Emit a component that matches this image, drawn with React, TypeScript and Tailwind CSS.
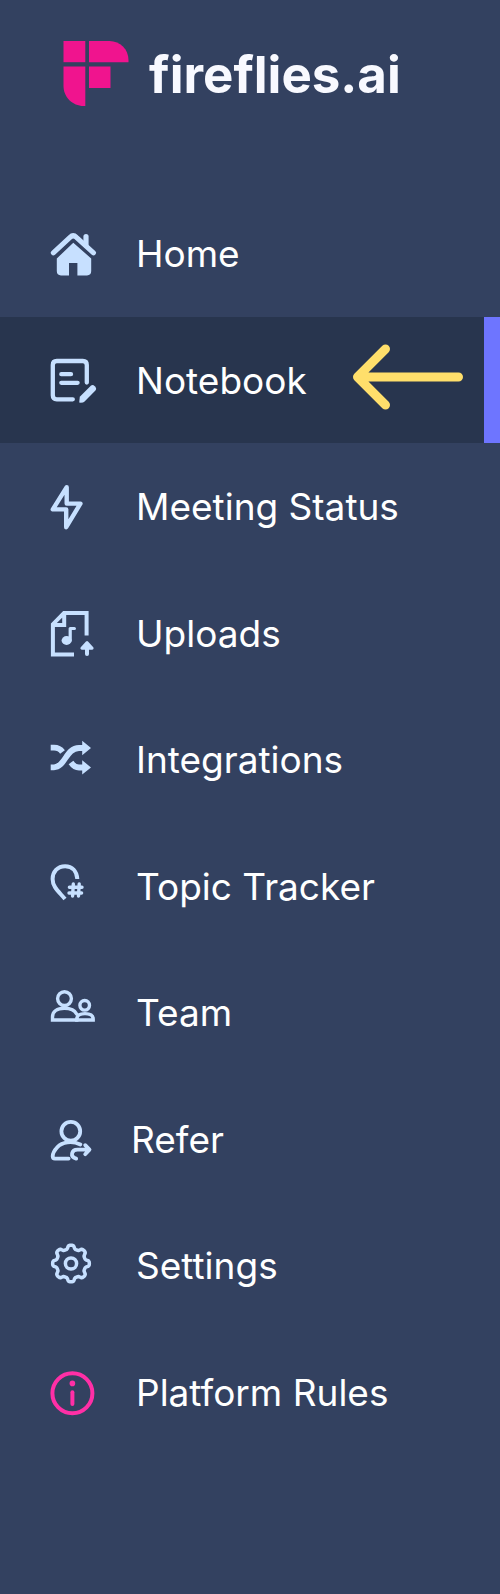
import React from "react";

// Outline of an eight-toothed gear around (23, 21.5)
const gearPath = (() => {
  const steps = 128;
  const points: string[] = [];
  for (let i = 0; i < steps; i++) {
    const angle = (i / steps) * Math.PI * 2;
    const radius = 16.5 + 1.9 * Math.tanh(2 * Math.cos(8 * angle));
    const x = 23 + radius * Math.cos(angle);
    const y = 21.5 + radius * Math.sin(angle);
    points.push(`${x.toFixed(2)} ${y.toFixed(2)}`);
  }
  return `M${points.join("L")}Z`;
})();

const Icon: React.FC<{ width?: number; children: React.ReactNode }> = ({
  width = 48,
  children,
}) => (
  <svg
    width={width}
    height={48}
    viewBox={`0 0 ${width} 48`}
    fill="none"
    stroke="currentColor"
    strokeWidth={4}
    strokeLinecap="round"
    strokeLinejoin="round"
    aria-hidden="true"
    className="shrink-0 overflow-visible"
  >
    {children}
  </svg>
);

const navItems = [
  {
    name: "Home",
    icon: (
      <Icon>
        <path d="M5.3 22.8 22 7.3Q25.2 4.2 28.4 7.3L45.5 22.8" strokeWidth={5} />
        <path d="M38 6.5V15" strokeWidth={5.2} />
        <path
          d="M25.3 12.7 43.2 28.5V41Q43.2 45.4 39 45.4H29.4V33H21V45.4H13Q8.8 45.4 8.8 41V28.5Z"
          fill="currentColor"
          stroke="none"
        />
      </Icon>
    ),
  },
  {
    name: "Notebook",
    icon: (
      <Icon>
        <g strokeWidth={4.3}>
          <path d="M38.8 25.5V8Q38.8 4 34.8 4H8.8Q4.8 4 4.8 8V38.3Q4.8 42.3 8.8 42.3H24.8" />
          <path d="M13.3 17.2H23M13.3 25.8H29.6" />
        </g>
        <path
          d="M31.2 45.6 31.8 39.8 42.8 28.8Q44.6 27.2 46.8 29.2 49.2 31.5 47.4 33.6L36.6 44.5Q35 46 31.2 45.6Z"
          fill="currentColor"
          stroke="none"
        />
      </Icon>
    ),
  },
  {
    name: "Meeting Status",
    icon: (
      <Icon>
        <path d="M18.7 4.2 4.8 26.4H18.2V44.2L32.4 20.6H18.7Z" strokeWidth={4.4} />
      </Icon>
    ),
  },
  {
    name: "Uploads",
    icon: (
      <Icon>
        <path
          d="M38.6 25.5V3H16L4.9 14.2V44.6H26M5.5 15H16.2V3.5"
          strokeLinecap="butt"
          strokeLinejoin="miter"
        />
        <ellipse cx="18.6" cy="30.5" rx="5" ry="4.4" fill="currentColor" stroke="none" />
        <path d="M22.2 30.5V18.5H26.4" strokeWidth={3.2} />
        <path d="M39 36V44" />
        <path d="M39 32.5 33.8 38.3H44.2Z" fill="currentColor" strokeWidth={2.8} />
      </Icon>
    ),
  },
  {
    name: "Integrations",
    icon: (
      <Icon>
        <g strokeWidth={5.8} strokeLinecap="butt">
          <path d="M2.7 31.3H6C17 31.3 18 12 31 12H36" />
          <path d="M2.7 11.7H6Q11.5 11.7 14.5 16" />
          <path d="M23 26.5Q26.5 31.5 31 31.5H36" />
        </g>
        <path
          d="M34.2 4.8 43 12 34.2 19.2ZM34.2 24.2 43 31.5 34.2 38.6Z"
          fill="currentColor"
          stroke="none"
        />
      </Icon>
    ),
  },
  {
    name: "Topic Tracker",
    icon: (
      <Icon>
        <path
          d="M29.3 16C28.8 8 24 3.2 17.2 3.2 9.5 3.2 4.6 9 4.6 16 4.6 24 10.5 28.3 17 36"
          strokeLinecap="butt"
        />
        <path
          d="M25.3 21 24.6 33M31.2 21 30.5 33M21.4 24.2H34M21 30H33.6"
          strokeWidth={3.4}
        />
      </Icon>
    ),
  },
  {
    name: "Team",
    icon: (
      <Icon>
        <g strokeWidth={3.4} strokeLinejoin="miter">
          <circle cx="16.5" cy="9.6" r="6.9" />
          <path d="M29.5 31H4.5V28C4.5 22.5 9 19.3 16.3 19.3 22 19.3 27 21.5 28.6 25" />
          <circle cx="36.7" cy="16.3" r="4.8" />
          <path d="M28.8 31V30C28.8 26.5 31.8 24.6 37 24.6 42.5 24.6 45.2 26.5 45.2 30V31Z" />
        </g>
      </Icon>
    ),
  },
  {
    name: "Refer",
    icon: (
      <Icon width={43}>
        <g strokeWidth={3.8}>
          <circle cx="22.8" cy="15.3" r="9.4" />
          <path d="M32.4 28.5C24 24.3 14 26 9.5 31 6.5 34.2 4.7 37.6 4.7 40.3Q4.7 42.6 7 42.6H20.6" />
          <path d="M28.2 42.6C21.5 40.5 23.5 33.6 29.5 33.6H41M37.2 29.2 41.5 33.6 37.2 38.2" />
        </g>
      </Icon>
    ),
  },
  {
    name: "Settings",
    icon: (
      <Icon>
        <path d={gearPath} strokeWidth={3.5} />
        <circle cx="23" cy="21.5" r="5.6" strokeWidth={3.5} />
      </Icon>
    ),
  },
  {
    name: "Platform Rules",
    color: "text-[#ff2fa6]",
    icon: (
      <Icon>
        <circle cx="24.4" cy="24.2" r="20" />
        <circle cx="24.4" cy="14.4" r="2.8" fill="currentColor" stroke="none" />
        <path d="M24.4 23.3V35" />
      </Icon>
    ),
  },
];

const App: React.FC = () => {
  const active = "Notebook";

  return (
    <aside className="min-h-screen flex flex-col bg-[#334160] pb-[139px] font-['Inter',sans-serif]">
      <header className="h-[190px] shrink-0 pt-10 px-[63px]">
        <a href="#" className="flex items-center gap-5">
          <svg
            width={66}
            height={66}
            viewBox="0 0 66 66"
            fill="#f0148e"
            aria-hidden="true"
            className="shrink-0"
          >
            <path d="M.5 1H22.3V22.2H.5Z" />
            <path d="M26 1H46.5C57 1 65.5 9.5 65.5 20V22.2H26Z" />
            <path d="M.5 26.5H22.3V66H20.5C9.5 66 .5 57 .5 46Z" />
            <path d="M26 26.5H47.5V48H26Z" />
          </svg>
          <span className="pt-1 text-[51px] leading-[62px] font-bold text-[#f8f9ff]">
            fireflies.ai
          </span>
        </a>
      </header>
      <nav className="flex-1 grid auto-rows-fr">
        {navItems.map((item) => (
          <a
            key={item.name}
            href="#"
            aria-current={item.name === active ? "page" : undefined}
            className={`flex items-center pt-0.5 pl-12 ${
              item.name === active ? "bg-[#28354e] border-r-16 border-[#6e75ff]" : ""
            }`}
          >
            <span className={item.color ?? "text-[#c7e0ff]"}>{item.icon}</span>
            <span className="ml-10 text-[37px] leading-[48px] text-white whitespace-nowrap">
              {item.name}
            </span>
            {item.name === active && (
              <svg
                width={112}
                height={74}
                viewBox="0 0 112 74"
                fill="none"
                stroke="#ffdf6b"
                strokeWidth={9}
                strokeLinecap="round"
                strokeLinejoin="round"
                aria-hidden="true"
                className="ml-auto mr-5 shrink-0"
              >
                <path d="M106.5 33H5.5M33.5 5 5.5 33 33.5 61" />
              </svg>
            )}
          </a>
        ))}
      </nav>
    </aside>
  );
};

export default App;
